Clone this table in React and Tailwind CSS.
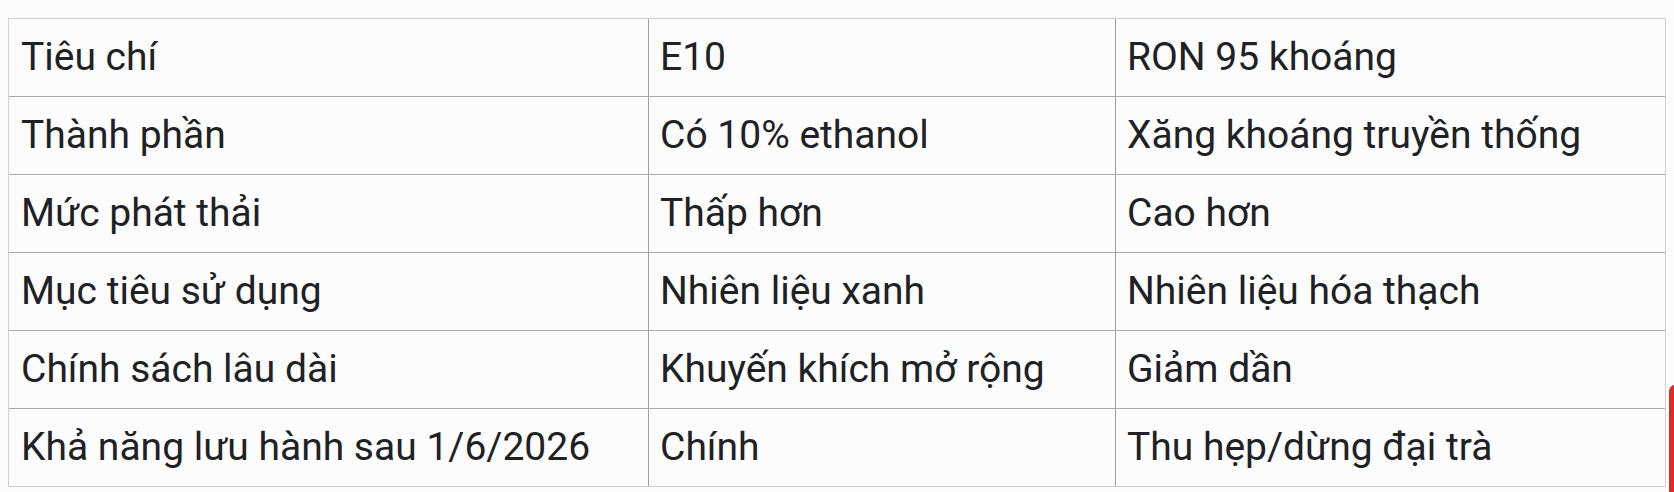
import React from "react";

const rows = [
  ["Tiêu chí", "E10", "RON 95 khoáng"],
  ["Thành phần", "Có 10% ethanol", "Xăng khoáng truyền thống"],
  ["Mức phát thải", "Thấp hơn", "Cao hơn"],
  ["Mục tiêu sử dụng", "Nhiên liệu xanh", "Nhiên liệu hóa thạch"],
  ["Chính sách lâu dài", "Khuyến khích mở rộng", "Giảm dần"],
  ["Khả năng lưu hành sau 1/6/2026", "Chính", "Thu hẹp/dừng đại trà"],
];

const App = () => {
  return (
    <div className="relative w-[1674px] h-[492px] overflow-hidden bg-[#fcfcfc] font-['Roboto',sans-serif] text-[#202124]">
      <div className="ml-[8px] mt-[18px] w-[1658px] border border-[#d0d0d0]">
        {rows.map((row, i) => (
          <div
            key={i}
            className={
              i === 0
                ? "grid grid-cols-[639px_467px_1fr] h-[77px]"
                : "grid grid-cols-[639px_467px_1fr] h-[78px] border-t border-[#a9a9a9]"
            }
          >
            <div className="flex items-center pl-[12px] text-[39px] leading-none">
              {row[0]}
            </div>
            <div className="flex items-center pl-[11px] border-l border-[#a0a0a0] text-[39px] leading-none">
              {row[1]}
            </div>
            <div className="flex items-center pl-[11px] border-l border-[#a0a0a0] text-[39px] leading-none">
              {row[2]}
            </div>
          </div>
        ))}
      </div>
      <div className="absolute left-[1669px] top-[385px] w-[10px] h-[120px] rounded-tl-[6px] bg-[#d93025]" />
    </div>
  );
};

export default App;
